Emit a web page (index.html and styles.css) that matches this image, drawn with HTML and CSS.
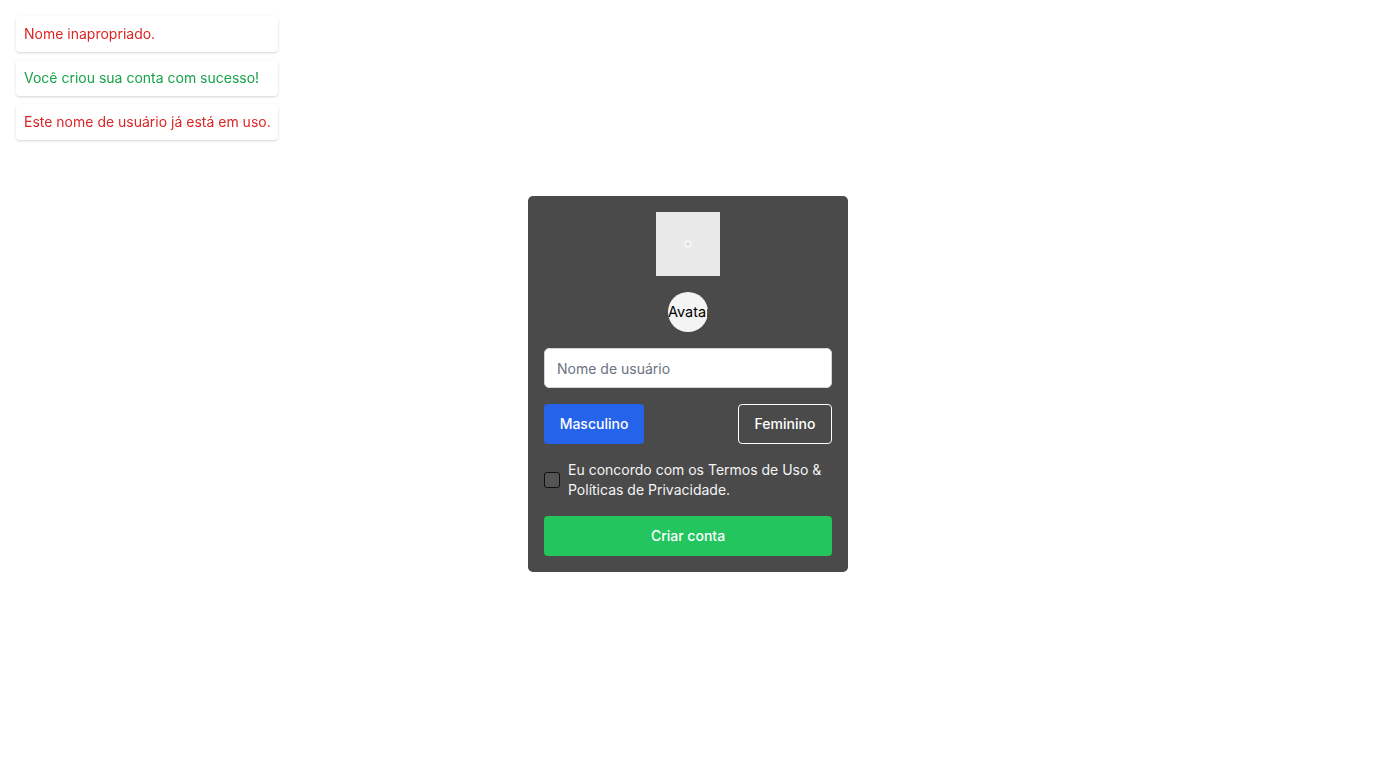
FILE: index.html
```html
<!DOCTYPE html>
<html lang="pt">
<head>
<meta charset="utf-8">
<link rel="stylesheet" href="styles.css">
</head>
<body>
<div class="toasts">
  <div class="toast error">Nome inapropriado.</div>
  <div class="toast success">Você criou sua conta com sucesso!</div>
  <div class="toast error">Este nome de usuário já está em uso.</div>
</div>
<main class="page">
  <form class="card">
    <div class="preview">
      <svg width="10" height="10" viewBox="0 0 10 10"><circle cx="5" cy="5" r="3" fill="none" stroke="#f7f7f7" stroke-width="1.4"/><circle cx="5" cy="5" r="0.9" fill="#d0d0d0"/></svg>
    </div>
    <div class="avatar"><span>Avatar</span></div>
    <input class="field" type="text" placeholder="Nome de usuário">
    <div class="genders">
      <button type="button" class="btn male">Masculino</button>
      <button type="button" class="btn female">Feminino</button>
    </div>
    <label class="terms">
      <span class="box"></span>
      <span class="terms-text">Eu concordo com os Termos de Uso &amp; Políticas de Privacidade.</span>
    </label>
    <button type="button" class="btn submit">Criar conta</button>
  </form>
</main>
</body>
</html>
```
FILE: styles.css
```css
* { box-sizing: border-box; }
html, body { margin: 0; padding: 0; }
body {
  font-family: Inter, "Noto Sans", sans-serif;
  font-size: 14px;
  line-height: 20px;
  background: #fff;
  width: 1376px;
  height: 768px;
  overflow: hidden;
}
.toasts {
  position: fixed;
  top: 16px;
  left: 16px;
  display: flex;
  flex-direction: column;
  gap: 8px;
  width: 262px;
}
.toast {
  height: 36px;
  padding: 8px 8px;
  background: #fff;
  border-radius: 4px;
  box-shadow: 0 1px 3px rgba(0,0,0,0.12), 0 1px 2px rgba(0,0,0,0.06);
  font-size: 14px;
  line-height: 20px;
  white-space: nowrap;
}
.toast.error { color: #dc2626; }
.toast.success { color: #16a34a; }
.page {
  height: 768px;
  display: flex;
  align-items: center;
  justify-content: center;
}
.card {
  width: 320px;
  background: #4a4a4a;
  border-radius: 5px;
  padding: 16px;
  display: flex;
  flex-direction: column;
  align-items: center;
  gap: 16px;
}
.preview {
  width: 64px;
  height: 64px;
  background: #e9e9e9;
  display: flex;
  align-items: center;
  justify-content: center;
}
.avatar {
  width: 40px;
  height: 40px;
  border-radius: 50%;
  background: #f4f4f4;
  display: flex;
  align-items: center;
  clip-path: inset(0);
}
.avatar span {
  white-space: nowrap;
  color: #000;
  font-size: 14.5px;
  line-height: 20px;
}
.field {
  width: 100%;
  height: 40px;
  border: 1px solid #d1d5db;
  border-radius: 5px;
  padding: 0 12px;
  font-family: inherit;
  font-size: 14px;
  color: #111;
  background: #fff;
  outline: none;
}
.field::placeholder { color: #6b7280; }
.genders {
  width: 100%;
  display: flex;
  justify-content: space-between;
}
.btn {
  height: 40px;
  border-radius: 4px;
  font-family: inherit;
  font-size: 14px;
  font-weight: 500;
  color: #fff;
  border: none;
  padding: 0 0 1px;
  cursor: pointer;
}
.btn.male {
  width: 100px;
  background: #2563eb;
}
.btn.female {
  width: 94px;
  background: transparent;
  border: 1px solid #fff;
}
.terms {
  width: 100%;
  display: flex;
  align-items: center;
  gap: 8px;
  color: #f3f4f6;
}
.box {
  flex: none;
  width: 16px;
  height: 16px;
  border: 1px solid #111;
  border-radius: 3px;
  background: #555;
}
.terms-text { width: 264px; }
.btn.submit {
  width: 100%;
  background: #22c55e;
}
```
